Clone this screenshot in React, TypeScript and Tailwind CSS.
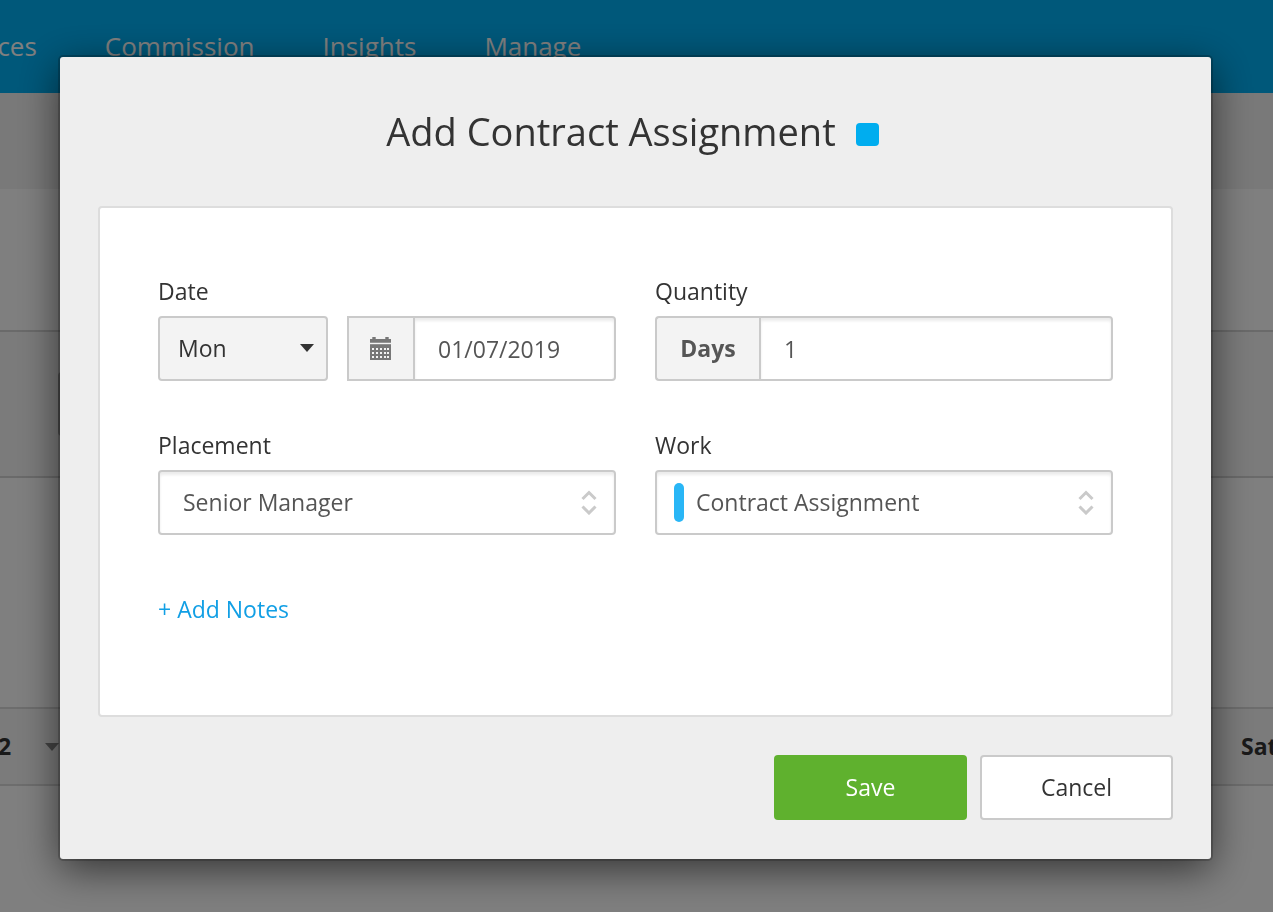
import { useState } from "react";
import type { ReactNode } from "react";

const navItems = ["Invoices", "Commission", "Insights", "Manage"];

const fieldBox =
  "h-[65px] w-full appearance-none border-2 border-[#cacaca] text-[23px] outline-none";
const insetTop = "bg-white text-[#555] shadow-[inset_0_3px_3px_rgba(0,0,0,0.08)]";

function CalendarIcon() {
  const columns = [2, 6, 10, 14, 17];
  const rows = [11, 15, 19];
  return (
    <svg width="22" height="24" viewBox="0 0 22 24" aria-hidden="true">
      <path d="M0 2h2.3V0h3.4v2h9.6V0h3.4v2H21v3.7H0z" fill="#777" />
      <path d="M0 7.2h21V23H0z" fill="#777" />
      {rows.map((y) =>
        columns.map((x) => (
          <rect key={`${x}-${y}`} x={x} y={y} width="2" height="2" fill="#f3f3f3" />
        )),
      )}
    </svg>
  );
}

function UpDownIcon() {
  return (
    <svg
      className="pointer-events-none absolute top-5 right-[19px]"
      width="16"
      height="25"
      viewBox="0 0 16 25"
      fill="none"
      stroke="#cacaca"
      strokeWidth="3"
      aria-hidden="true"
    >
      <path d="M1.5 9 8 2.5 14.5 9M1.5 16.5 8 23l6.5-6.5" />
    </svg>
  );
}

function Field({ label, id, children }: { label: string; id: string; children: ReactNode }) {
  return (
    <div className="flex min-w-0 flex-col gap-[9px]">
      <label htmlFor={id} className="text-[23px] leading-[31px] text-[#333]">
        {label}
      </label>
      {children}
    </div>
  );
}

function Timesheet() {
  return (
    <div className="flex min-h-screen flex-col bg-white">
      <header className="h-[93px] overflow-hidden bg-[#00b0f4]">
        <nav className="-ml-[61px] flex gap-17 pt-7">
          {navItems.map((item) => (
            <a key={item} href="#" className="text-[26px] leading-9 text-white">
              {item}
            </a>
          ))}
        </nav>
      </header>
      <div className="h-24 bg-[#f2f2f2]" />
      <div className="h-[141px]" />
      <div className="flex h-37 items-center border-y-2 border-[#d4d4d4] bg-[#f6f6f6] pl-[58px]">
        <div className="h-16 w-40 rounded border-2 border-[#b4b4b4] bg-white" />
      </div>
      <div className="h-[229px]" />
      <div className="flex h-[79px] items-center justify-between overflow-hidden border-y-2 border-[#dadada] bg-[#f6f6f6] text-[23px] font-bold text-[#333]">
        <div className="-ml-0.5 flex items-center gap-[34px]">
          <span>2</span>
          <svg width="14" height="8" viewBox="0 0 14 8" aria-hidden="true">
            <path d="M0 0h14L7 8z" fill="#888" />
          </svg>
        </div>
        <span className="w-8">Sat</span>
      </div>
    </div>
  );
}

function AssignmentDialog() {
  const [day, setDay] = useState("Mon");
  const [date, setDate] = useState("01/07/2019");
  const [quantity, setQuantity] = useState("1");
  const [placement, setPlacement] = useState("Senior Manager");
  const [work, setWork] = useState("Contract Assignment");

  return (
    <form
      role="dialog"
      aria-labelledby="dialog-title"
      className="w-full rounded-[3px] bg-[#eee] px-[38px] pt-[46px] pb-[39px] shadow-[0_0_0_2px_rgba(0,0,0,0.2),0_10px_40px_rgba(0,0,0,0.6)]"
      onSubmit={(event) => event.preventDefault()}
    >
      <div className="flex items-center justify-center gap-5 pr-1.5">
        <h1 id="dialog-title" className="text-[38px] leading-14 text-[#333]">
          Add Contract Assignment
        </h1>
        <span className="mt-1.5 size-[23px] rounded bg-[#00adef]" />
      </div>

      <div className="mt-[47px] rounded border-2 border-[#ddd] bg-white px-[58px] pt-[68px] pb-[90px]">
        <div className="grid grid-cols-2 gap-x-[39px] gap-y-[49px]">
          <Field label="Date" id="day">
            <div className="flex gap-[19px]">
              <div className="relative w-[170px] shrink-0">
                <select
                  id="day"
                  value={day}
                  onChange={(event) => setDay(event.target.value)}
                  className={`${fieldBox} rounded bg-[#f3f3f3] pl-[18px] text-[#333]`}
                >
                  <option>Mon</option>
                </select>
                <svg
                  className="pointer-events-none absolute top-7 right-3.5"
                  width="14"
                  height="8"
                  viewBox="0 0 14 8"
                  aria-hidden="true"
                >
                  <path d="M0 0h14L7 8z" fill="#333" />
                </svg>
              </div>
              <div className="flex min-w-0 flex-1">
                <button
                  type="button"
                  aria-label="Choose date"
                  className="flex w-[66px] shrink-0 items-center justify-center border-2 border-r-0 border-[#cacaca] bg-[#f3f3f3]"
                >
                  <CalendarIcon />
                </button>
                <input
                  aria-label="Date"
                  value={date}
                  onChange={(event) => setDate(event.target.value)}
                  className={`${fieldBox} ${insetTop} min-w-0 rounded-r px-[23px]`}
                />
              </div>
            </div>
          </Field>

          <Field label="Quantity" id="quantity">
            <div className="flex">
              <span className="flex w-[104px] shrink-0 items-center justify-center rounded-l border-2 border-r-0 border-[#cacaca] bg-[#f3f3f3] text-[23px] font-bold text-[#555]">
                Days
              </span>
              <input
                id="quantity"
                value={quantity}
                onChange={(event) => setQuantity(event.target.value)}
                className={`${fieldBox} ${insetTop} min-w-0 rounded-r px-[23px]`}
              />
            </div>
          </Field>

          <Field label="Placement" id="placement">
            <div className="relative">
              <select
                id="placement"
                value={placement}
                onChange={(event) => setPlacement(event.target.value)}
                className={`${fieldBox} ${insetTop} rounded px-[23px]`}
              >
                <option>Senior Manager</option>
              </select>
              <UpDownIcon />
            </div>
          </Field>

          <Field label="Work" id="work">
            <div className="relative">
              <select
                id="work"
                value={work}
                onChange={(event) => setWork(event.target.value)}
                className={`${fieldBox} ${insetTop} rounded pr-12 pl-[39px]`}
              >
                <option>Contract Assignment</option>
              </select>
              <span className="pointer-events-none absolute top-[13px] left-[19px] h-[39px] w-2.5 rounded-full bg-[#29b6f6]" />
              <UpDownIcon />
            </div>
          </Field>
        </div>

        <a href="#" className="mt-[58px] inline-block text-[23px] leading-8 text-[#119fe5]">
          + Add Notes
        </a>
      </div>

      <div className="mt-[38px] flex justify-end gap-[13px] text-[23px]">
        <button type="submit" className="h-[65px] w-[193px] rounded bg-[#5fb12e] text-white">
          Save
        </button>
        <button
          type="button"
          className="h-[65px] w-[193px] rounded border-2 border-[#cacaca] bg-white text-[#333]"
        >
          Cancel
        </button>
      </div>
    </form>
  );
}

export default function App() {
  return (
    <div className="relative h-screen overflow-hidden font-['Open_Sans',sans-serif]">
      <div aria-hidden="true">
        <Timesheet />
      </div>
      <div className="fixed inset-0 overflow-auto bg-black/50 pt-[57px] pr-[62px] pl-15">
        <AssignmentDialog />
      </div>
    </div>
  );
}
